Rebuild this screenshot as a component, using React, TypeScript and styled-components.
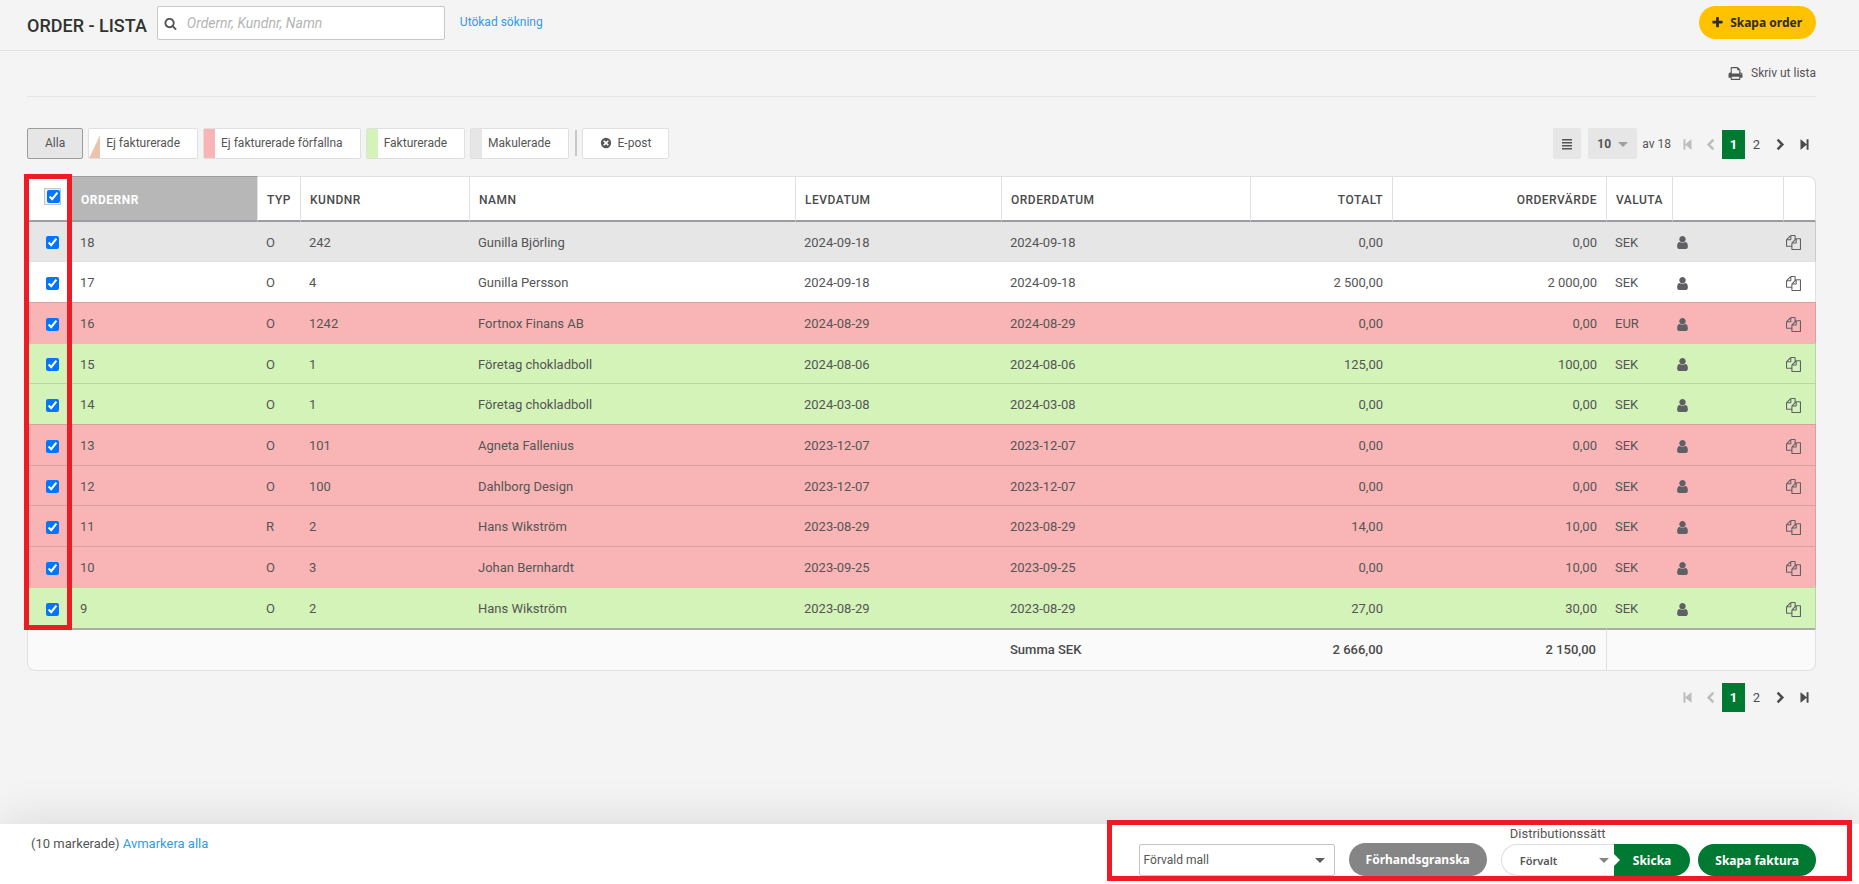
import React, { useState } from "react";
import styled, { createGlobalStyle, css } from "styled-components";

const GlobalStyle = createGlobalStyle`
  *, *::before, *::after { box-sizing: border-box; }
  body {
    margin: 0;
    background: #f4f4f4;
    color: #555;
    font-family: Roboto, "Liberation Sans", sans-serif;
    font-size: 13px;
    line-height: 20px;
  }
  button, input, select { font-family: inherit; color: inherit; margin: 0; }
  button { cursor: pointer; }
`;

const displayFont = `"Noto Sans", "Open Sans", sans-serif`;

/* ---------- Icons ---------- */

const iconPaths = {
  search:
    "M1216 832q0-185-131.5-316.5t-316.5-131.5-316.5 131.5-131.5 316.5 131.5 316.5 316.5 131.5 316.5-131.5 131.5-316.5zm512 832q0 52-38 90t-90 38q-54 0-90-38l-343-342q-179 124-399 124-143 0-273.5-55.5t-225-150-150-225-55.5-273.5 55.5-273.5 150-225 225-150 273.5-55.5 273.5 55.5 225 150 150 225 55.5 273.5q0 220-124 399l343 343q37 37 37 90z",
  plus: "M1600 736v192q0 40-28 68t-68 28h-416v416q0 40-28 68t-68 28h-192q-40 0-68-28t-28-68v-416h-416q-40 0-68-28t-28-68v-192q0-40 28-68t68-28h416v-416q0-40 28-68t68-28h192q40 0 68 28t28 68v416h416q40 0 68 28t28 68z",
  print:
    "M448 1536h896v-256h-896v256zm0-640h896v-384h-160q-40 0-68-28t-28-68v-160h-640v640zm1152 64q0-26-19-45t-45-19-45 19-19 45 19 45 45 19 45-19 19-45zm128 0v416q0 13-9.5 22.5t-22.5 9.5h-224v160q0 40-28 68t-68 28h-960q-40 0-68-28t-28-68v-160h-224q-13 0-22.5-9.5t-9.5-22.5v-416q0-79 56.5-135.5t135.5-56.5h64v-544q0-40 28-68t68-28h672q40 0 88 20t76 48l152 152q28 28 48 76t20 88v256h64q79 0 135.5 56.5t56.5 135.5z",
  user: "M1536 1399q0 109-62.5 187t-150.5 78h-854q-88 0-150.5-78t-62.5-187q0-85 8.5-160.5t31.5-152 58.5-131 94-89 134.5-34.5q131 128 313 128t313-128q76 0 134.5 34.5t94 89 58.5 131 31.5 152 8.5 160.5zm-256-887q0 159-112.5 271.5t-271.5 112.5-271.5-112.5-112.5-271.5 112.5-271.5 271.5-112.5 271.5 112.5 112.5 271.5z",
  copy: "M1696 384q40 0 68 28t28 68v1216q0 40-28 68t-68 28h-960q-40 0-68-28t-28-68v-288h-544q-40 0-68-28t-28-68v-672q0-40 20-88t48-76l408-408q28-28 76-48t88-20h416q40 0 68 28t28 68v328q68-40 128-40h416zm-544 213l-299 299h299v-299zm-640-384l-299 299h299v-299zm196 647l316-316v-416h-384v416q0 40-28 68t-68 28h-416v640h512v-256q0-40 20-88t48-76zm956 804v-1152h-384v416q0 40-28 68t-68 28h-416v640h896z",
  bars: "M149 149h1493v210h-1493zM149 597h1493v210h-1493zM149 1045h1493v210h-1493zM149 1493h1493v210h-1493z",
  closeCircle:
    "M896 128a768 768 0 1 0 0 1536a768 768 0 1 0 0-1536zM620 470l276 250 276-250 150 150-250 276 250 276-150 150-276-250-276 250-150-150 250-276-250-276z",
  first: "M340 170h270v1452h-270zM1450 170v1452l-200-130-640-560v-72l640-560z",
  last: "M1452 170h-270v1452h270zM342 170v1452l200-130 640-560v-72l-640-560z",
  prev: "M1180 110l240 240-530 546 530 546-240 240-780-786z",
  next: "M612 110l-240 240 530 546-530 546 240 240 780-786z",
};

const Svg = styled.svg`
  display: block;
  flex: none;
  fill: currentColor;
`;

function Icon({ name, size = 14 }: { name: keyof typeof iconPaths; size?: number }) {
  return (
    <Svg width={size} height={size} viewBox="0 0 1792 1792" fillRule="evenodd" aria-hidden="true">
      <path d={iconPaths[name]} />
    </Svg>
  );
}

/* ---------- Page frame ---------- */

const Page = styled.div`
  display: flex;
  flex-direction: column;
  min-height: 100vh;
`;

const Header = styled.header`
  display: flex;
  align-items: flex-start;
  padding: 6px 43px 10px 27px;
  border-bottom: 1px solid #e4e4e4;
`;

const Title = styled.h1`
  margin: 10px 10px 0 0;
  color: #2f332f;
  font-size: 18px;
  font-weight: 500;
  line-height: 20px;
  white-space: nowrap;
`;

const SearchBox = styled.label`
  display: flex;
  align-items: center;
  gap: 10px;
  width: 288px;
  height: 34px;
  padding: 0 6px;
  color: #555;
  background: #fff;
  border: 1px solid #c8c8c8;
  border-radius: 2px;
`;

const SearchInput = styled.input`
  flex: 1;
  min-width: 0;
  padding: 0;
  border: 0;
  outline: 0;
  background: none;
  font-size: 14px;
  &::placeholder { color: #b4b4b4; font-style: italic; opacity: 1; }
`;

const Link = styled.a`
  color: #2f9de4;
  text-decoration: none;
`;

const AdvancedLink = styled(Link)`
  margin: 6px auto 0 15px;
  font-size: 12px;
`;

const CreateButton = styled.button`
  display: flex;
  align-items: center;
  gap: 6px;
  height: 33px;
  padding: 0 14px 0 12px;
  border: 0;
  border-radius: 17px;
  background: #ffc200;
  color: #2d2d2d;
  font-family: ${displayFont};
  font-size: 12px;
  font-weight: 700;
`;

const Main = styled.main`
  flex: 1;
  padding: 0 43px 24px 27px;
`;

const PrintBar = styled.div`
  display: flex;
  justify-content: flex-end;
  padding: 12px 0 13px;
  border-bottom: 1px solid #e4e4e4;
`;

const PrintButton = styled.button`
  display: flex;
  align-items: center;
  gap: 8px;
  padding: 0;
  border: 0;
  background: none;
  font-size: 12px;
  line-height: 20px;
`;

/* ---------- Filters and pager ---------- */

const Toolbar = styled.div`
  display: flex;
  justify-content: space-between;
  padding: 31px 0 17px;
`;

const Filters = styled.div`
  display: flex;
  gap: 5px;
`;

const FilterButton = styled.button<{ $active?: boolean; $swatch?: boolean }>`
  display: flex;
  align-items: center;
  gap: 6px;
  height: 31px;
  padding: 0 17px 2px ${(p) => (p.$swatch ? "0" : "17px")};
  background: ${(p) => (p.$active ? "#e6e6e6" : "#fff")};
  border: 1px solid ${(p) => (p.$active ? "#9c9ca0" : "#e0e0e0")};
  border-radius: 2px;
  font-size: 12px;
  white-space: nowrap;
`;

const swatches = {
  red: "#f9b5b5",
  green: "#d3f3b8",
  gray: "#e6e6e6",
  mixed: "repeating-conic-gradient(#f3b9a6 0 25%, #e4cdb0 0 50%) 0 0 / 2px 2px",
};

const Swatch = styled.span<{ $kind: keyof typeof swatches }>`
  width: 11px;
  height: 29px;
  margin-bottom: -2px;
  background: ${(p) => swatches[p.$kind]};
  ${(p) => p.$kind === "mixed" && css`clip-path: polygon(0 100%, 100% 20%, 100% 100%);`}
`;

const Divider = styled.span`
  width: 2px;
  height: 26px;
  margin: 2px 0 0 1px;
  background: #c8c8c8;
`;

const PagerTools = styled.div`
  display: flex;
  align-items: center;
`;

const ViewButton = styled.button`
  display: grid;
  place-items: center;
  width: 28px;
  height: 31px;
  margin-right: 7px;
  padding: 0;
  border: 0;
  border-radius: 2px;
  background: #e6e6e6;
`;

const SelectWrap = styled.span<{ $arrow: string; $inset: number }>`
  position: relative;
  display: inline-flex;
  &::after {
    content: "";
    position: absolute;
    top: calc(50% - 2px);
    right: ${(p) => p.$inset}px;
    border: 5px solid transparent;
    border-top-color: ${(p) => p.$arrow};
    border-bottom: 0;
    pointer-events: none;
  }
`;

const Select = styled.select`
  appearance: none;
  outline: 0;
  border-radius: 2px;
`;

const SizeSelect = styled(Select)`
  width: 49px;
  height: 31px;
  padding: 0 9px;
  border: 0;
  background: #e6e6e6;
  font-size: 12px;
  font-weight: 700;
`;

const Total = styled.span`
  margin: 0 5px;
  font-size: 12px;
`;

const Pager = styled.nav`
  display: flex;
  justify-content: flex-end;
  padding-top: 2px;
`;

const PagerButton = styled.button<{ $current?: boolean }>`
  display: grid;
  place-items: center;
  width: 23px;
  height: 29px;
  padding: 0;
  border: 0;
  background: ${(p) => (p.$current ? "#007a33" : "none")};
  color: ${(p) => (p.$current ? "#fff" : "#4c4c50")};
  font-size: 13px;
  font-weight: ${(p) => (p.$current ? 700 : 400)};
  &:disabled { color: #bdbdbd; cursor: default; }
  &:nth-last-child(-n + 2) { width: 24px; }
`;

function Pagination({ label }: { label: string }) {
  return (
    <Pager aria-label={label}>
      <PagerButton disabled aria-label="Första sidan"><Icon name="first" size={13} /></PagerButton>
      <PagerButton disabled aria-label="Föregående sida"><Icon name="prev" size={13} /></PagerButton>
      <PagerButton $current aria-current="page">1</PagerButton>
      <PagerButton>2</PagerButton>
      <PagerButton aria-label="Nästa sida"><Icon name="next" size={13} /></PagerButton>
      <PagerButton aria-label="Sista sidan"><Icon name="last" size={13} /></PagerButton>
    </Pager>
  );
}

/* ---------- Order table ---------- */

const TableArea = styled.div`
  position: relative;
  margin-bottom: 10px;
`;

const Highlight = styled.div`
  position: absolute;
  border: 5px solid #ed1c24;
  pointer-events: none;
`;

const ColumnHighlight = styled(Highlight)`
  top: -2px;
  left: -3px;
  width: 48px;
  bottom: 41px;
`;

const Table = styled.table`
  width: 100%;
  table-layout: fixed;
  border-collapse: separate;
  border-spacing: 0;
`;

const Th = styled.th<{ $right?: boolean; $sorted?: boolean }>`
  height: 46px;
  padding: 2px 9px 0;
  background: ${(p) => (p.$sorted ? "#b7b7b7" : "#fff")};
  color: ${(p) => (p.$sorted ? "#fff" : "#4a4a4a")};
  border-top: 1px solid ${(p) => (p.$sorted ? "#9c9ca0" : "#e0e0e0")};
  border-right: 1px solid #e0e0e0;
  border-bottom: 2px solid #9c9ca3;
  font-size: 12px;
  font-weight: ${(p) => (p.$sorted ? 700 : 500)};
  letter-spacing: 0.5px;
  text-align: ${(p) => (p.$right ? "right" : "left")};
  white-space: nowrap;
  &:first-child { padding: 0; border-left: 1px solid #e0e0e0; border-right: 0; border-top-left-radius: 8px; }
  &:last-child { border-top-right-radius: 8px; }
`;

const tones = { gray: "#e6e6e6", white: "#fff", red: "#f9b5b5", green: "#d3f3b8" };
type Tone = keyof typeof tones;

const Td = styled.td<{ $right?: boolean; $icon?: boolean }>`
  padding: ${(p) => (p.$icon ? "2px 2px 0" : "2px 10px 0 8px")};
  border-top: 1px solid rgba(0, 0, 0, 0.12);
  text-align: ${(p) => (p.$right ? "right" : "left")};
  white-space: nowrap;
  &:first-child { padding: 2px 0 0; border-left: 1px solid rgba(0, 0, 0, 0.12); }
  &:last-child { border-right: 1px solid rgba(0, 0, 0, 0.12); }
`;

const Row = styled.tr<{ $tone: Tone }>`
  ${Td} { height: 41px; background: ${(p) => tones[p.$tone]}; }
  &:nth-child(-3n + 7) ${Td} { height: 40px; }
  &:first-child ${Td} { height: 39px; border-top: 0; }
`;

const SumCell = styled.td<{ $right?: boolean; $divided?: boolean }>`
  height: 43px;
  padding: 0 10px 0 8px;
  background: #fafafa;
  color: #4a4a4a;
  border-top: 2px solid #ababab;
  border-bottom: 1px solid #e0e0e0;
  font-weight: 500;
  text-align: ${(p) => (p.$right ? "right" : "left")};
  ${(p) => p.$divided && css`border-right: 1px solid #e0e0e0;`}
  &:first-child { border-left: 1px solid #e0e0e0; border-bottom-left-radius: 8px; }
  &:last-child { border-right: 1px solid #e0e0e0; border-bottom-right-radius: 8px; }
`;

const CheckBox = styled.input.attrs({ type: "checkbox" })`
  display: block;
  width: 13px;
  height: 13px;
  margin-left: 18px;
  accent-color: #0075ff;
`;

const CheckFrame = styled.span`
  display: block;
  width: 17px;
  margin: 0 0 4px 16px;
  padding: 1px;
  border: 1px solid #c4c4c4;
  background: #eee;
  ${CheckBox} { margin-left: 1px; }
`;

const CellButton = styled.button`
  display: block;
  padding: 0;
  border: 0;
  background: none;
  color: #5f5f66;
`;

interface Order {
  nr: string;
  type: string;
  customer: string;
  name: string;
  delivery: string;
  date: string;
  total: string;
  value: string;
  currency: string;
  tone: Tone;
}

const orders: Order[] = [
  { nr: "18", type: "O", customer: "242", name: "Gunilla Björling", delivery: "2024-09-18", date: "2024-09-18", total: "0,00", value: "0,00", currency: "SEK", tone: "gray" },
  { nr: "17", type: "O", customer: "4", name: "Gunilla Persson", delivery: "2024-09-18", date: "2024-09-18", total: "2 500,00", value: "2 000,00", currency: "SEK", tone: "white" },
  { nr: "16", type: "O", customer: "1242", name: "Fortnox Finans AB", delivery: "2024-08-29", date: "2024-08-29", total: "0,00", value: "0,00", currency: "EUR", tone: "red" },
  { nr: "15", type: "O", customer: "1", name: "Företag chokladboll", delivery: "2024-08-06", date: "2024-08-06", total: "125,00", value: "100,00", currency: "SEK", tone: "green" },
  { nr: "14", type: "O", customer: "1", name: "Företag chokladboll", delivery: "2024-03-08", date: "2024-03-08", total: "0,00", value: "0,00", currency: "SEK", tone: "green" },
  { nr: "13", type: "O", customer: "101", name: "Agneta Fallenius", delivery: "2023-12-07", date: "2023-12-07", total: "0,00", value: "0,00", currency: "SEK", tone: "red" },
  { nr: "12", type: "O", customer: "100", name: "Dahlborg Design", delivery: "2023-12-07", date: "2023-12-07", total: "0,00", value: "0,00", currency: "SEK", tone: "red" },
  { nr: "11", type: "R", customer: "2", name: "Hans Wikström", delivery: "2023-08-29", date: "2023-08-29", total: "14,00", value: "10,00", currency: "SEK", tone: "red" },
  { nr: "10", type: "O", customer: "3", name: "Johan Bernhardt", delivery: "2023-09-25", date: "2023-09-25", total: "0,00", value: "10,00", currency: "SEK", tone: "red" },
  { nr: "9", type: "O", customer: "2", name: "Hans Wikström", delivery: "2023-08-29", date: "2023-08-29", total: "27,00", value: "30,00", currency: "SEK", tone: "green" },
];

/* The name column takes whatever width is left over. */
const Col = styled.col<{ $width?: number }>`
  width: ${(p) => (p.$width ? `${p.$width}px` : "auto")};
`;
const columnWidths = [45, 186, 43, 169, undefined, 206, 249, 142, 214, 66, 111, 32];

/* ---------- Action bar ---------- */

const ActionBar = styled.footer`
  position: sticky;
  bottom: 0;
  display: flex;
  justify-content: space-between;
  height: 60px;
  padding: 0 43px 8px 31px;
  background: #fff;
  box-shadow: 0 0 50px rgba(0, 0, 0, 0.12);
`;

const Selection = styled.div`
  padding-top: 10px;
`;

const Actions = styled.div`
  display: flex;
  align-items: flex-end;
`;

const ActionHighlight = styled(Highlight)`
  top: -4px;
  right: 7px;
  bottom: 3px;
  width: 745px;
`;

const TemplateSelect = styled(Select)`
  width: 196px;
  height: 32px;
  padding: 0 4px;
  background: #fff;
  border: 1px solid #c4c4c4;
  font-size: 12px;
`;

const PillButton = styled.button<{ $muted?: boolean }>`
  height: ${(p) => (p.$muted ? 33 : 32)}px;
  margin: ${(p) => (p.$muted ? "0 14px" : "0 0 0 8px")};
  padding: 0 17px;
  border: 0;
  border-radius: 17px;
  background: ${(p) => (p.$muted ? "#858585" : "#007a33")};
  color: #fff;
  font-family: ${displayFont};
  font-size: 12px;
  font-weight: 700;
`;

const Distribution = styled.div`
  display: flex;
  flex-direction: column;
`;

const DistributionLabel = styled.label`
  padding-left: 9px;
`;

const Combo = styled.div`
  display: flex;
`;

const MethodSelect = styled(Select)`
  width: 113px;
  height: 32px;
  padding: 0 18px;
  background: #fff;
  border: 1px solid #dcdcdc;
  border-right: 0;
  border-radius: 16px 0 0 16px;
  font-family: ${displayFont};
  font-size: 11px;
  font-weight: 600;
`;

const SendButton = styled(PillButton)`
  position: relative;
  margin: 0;
  padding: 0 19px;
  border-radius: 0 16px 16px 0;
  &::before {
    content: "";
    position: absolute;
    left: 0;
    top: calc(50% - 6px);
    border: 6px solid transparent;
    border-left-color: #fff;
    border-right: 0;
  }
`;

export default function App() {
  const [selected, setSelected] = useState<string[]>(orders.map((o) => o.nr));
  const allSelected = selected.length === orders.length;
  const toggle = (nr: string) =>
    setSelected((s) => (s.includes(nr) ? s.filter((n) => n !== nr) : [...s, nr]));

  return (
    <Page>
      <GlobalStyle />
      <Header>
        <Title>ORDER - LISTA</Title>
        <SearchBox>
          <Icon name="search" size={13} />
          <SearchInput type="text" aria-label="Sök order" placeholder="Ordernr, Kundnr, Namn" />
        </SearchBox>
        <AdvancedLink href="#sok">Utökad sökning</AdvancedLink>
        <CreateButton>
          <Icon name="plus" size={13} />
          Skapa order
        </CreateButton>
      </Header>

      <Main>
        <PrintBar>
          <PrintButton>
            <Icon name="print" size={15} />
            Skriv ut lista
          </PrintButton>
        </PrintBar>

        <Toolbar>
          <Filters>
            <FilterButton $active>Alla</FilterButton>
            <FilterButton $swatch><Swatch $kind="mixed" />Ej fakturerade</FilterButton>
            <FilterButton $swatch><Swatch $kind="red" />Ej fakturerade förfallna</FilterButton>
            <FilterButton $swatch><Swatch $kind="green" />Fakturerade</FilterButton>
            <FilterButton $swatch><Swatch $kind="gray" />Makulerade</FilterButton>
            <Divider />
            <FilterButton><Icon name="closeCircle" size={12} />E-post</FilterButton>
          </Filters>
          <PagerTools>
            <ViewButton aria-label="Visa kolumner"><Icon name="bars" size={12} /></ViewButton>
            <SelectWrap $arrow="#a0a0a4" $inset={9}>
              <SizeSelect aria-label="Antal per sida" defaultValue="10">
                <option>10</option>
                <option>25</option>
              </SizeSelect>
            </SelectWrap>
            <Total>av 18</Total>
            <Pagination label="Sidor ovanför listan" />
          </PagerTools>
        </Toolbar>

        <TableArea>
          <Table>
            <colgroup>
              {columnWidths.map((w, i) => <Col key={i} $width={w} />)}
            </colgroup>
            <thead>
              <tr>
                <Th>
                  <CheckFrame>
                    <CheckBox
                      aria-label="Markera alla"
                      checked={allSelected}
                      onChange={() => setSelected(allSelected ? [] : orders.map((o) => o.nr))}
                    />
                  </CheckFrame>
                </Th>
                <Th $sorted>ORDERNR</Th>
                <Th>TYP</Th>
                <Th>KUNDNR</Th>
                <Th>NAMN</Th>
                <Th>LEVDATUM</Th>
                <Th>ORDERDATUM</Th>
                <Th $right>TOTALT</Th>
                <Th $right>ORDERVÄRDE</Th>
                <Th>VALUTA</Th>
                <Th />
                <Th />
              </tr>
            </thead>
            <tbody>
              {orders.map((o) => (
                <Row key={o.nr} $tone={o.tone}>
                  <Td>
                    <CheckBox
                      aria-label={`Markera order ${o.nr}`}
                      checked={selected.includes(o.nr)}
                      onChange={() => toggle(o.nr)}
                    />
                  </Td>
                  <Td>{o.nr}</Td>
                  <Td>{o.type}</Td>
                  <Td>{o.customer}</Td>
                  <Td>{o.name}</Td>
                  <Td>{o.delivery}</Td>
                  <Td>{o.date}</Td>
                  <Td $right>{o.total}</Td>
                  <Td $right>{o.value}</Td>
                  <Td>{o.currency}</Td>
                  <Td $icon><CellButton aria-label="Visa kund"><Icon name="user" size={15} /></CellButton></Td>
                  <Td $icon><CellButton aria-label="Kopiera order"><Icon name="copy" size={15} /></CellButton></Td>
                </Row>
              ))}
            </tbody>
            <tfoot>
              <tr>
                <SumCell colSpan={6} />
                <SumCell>Summa SEK</SumCell>
                <SumCell $right>2 666,00</SumCell>
                <SumCell $right $divided>2 150,00</SumCell>
                <SumCell colSpan={3} />
              </tr>
            </tfoot>
          </Table>
          <ColumnHighlight />
        </TableArea>

        <Pagination label="Sidor under listan" />
      </Main>

      <ActionBar>
        <Selection>
          ({selected.length} markerade) <Link href="#avmarkera">Avmarkera alla</Link>
        </Selection>
        <Actions>
          <SelectWrap $arrow="#5f5f63" $inset={10}>
            <TemplateSelect aria-label="Mall" defaultValue="Förvald mall">
              <option>Förvald mall</option>
            </TemplateSelect>
          </SelectWrap>
          <PillButton $muted>Förhandsgranska</PillButton>
          <Distribution>
            <DistributionLabel htmlFor="distribution">Distributionssätt</DistributionLabel>
            <Combo>
              <SelectWrap $arrow="#858589" $inset={5}>
                <MethodSelect id="distribution" defaultValue="Förvalt">
                  <option>Förvalt</option>
                </MethodSelect>
              </SelectWrap>
              <SendButton>Skicka</SendButton>
            </Combo>
          </Distribution>
          <PillButton>Skapa faktura</PillButton>
        </Actions>
        <ActionHighlight />
      </ActionBar>
    </Page>
  );
}
